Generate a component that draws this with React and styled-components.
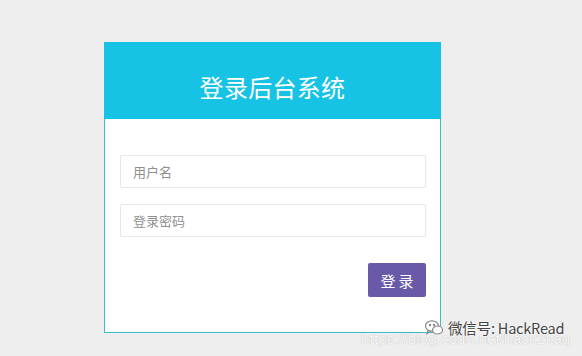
import React from "react";
import styled, { createGlobalStyle } from "styled-components";

const Global = createGlobalStyle`
  html, body { margin: 0; padding: 0; background: #efeeee; }
  body { font-family: "Noto Sans CJK SC", "Noto Sans", sans-serif; }
  * { box-sizing: border-box; }
`;

const Page = styled.div`
  position: relative;
  width: 582px;
  height: 356px;
  overflow: hidden;
  padding: 42px 0 0 104px;
`;

const Card = styled.div`
  width: 337px;
  height: 291px;
  background: #fff;
  border: 1px solid #3cbfcb;
  border-top: none;
  display: flex;
  flex-direction: column;
`;

const Header = styled.div`
  height: 77px;
  margin: 0 -1px;
  background: #17c3e5;
  display: flex;
  align-items: center;
  justify-content: center;
  padding-top: 12px;
`;

const Title = styled.h1`
  margin: 0;
  font-size: 24px;
  font-weight: 400;
  color: #fff;
  line-height: 1;
  letter-spacing: 0.3px;
`;

const Body = styled.div`
  padding: 36px 14px 0 15px;
  display: flex;
  flex-direction: column;
  gap: 16px;
`;

const Input = styled.input`
  height: 33px;
  width: 100%;
  border: 1px solid #e8e8e8;
  border-radius: 2px;
  padding: 0 12px;
  font-family: "Noto Sans CJK SC", sans-serif;
  font-size: 13px;
  color: #333;
  outline: none;
  &::placeholder { color: #8f8f8f; }
`;

const Actions = styled.div`
  display: flex;
  justify-content: flex-end;
  margin-top: 10px;
`;

const Button = styled.button`
  width: 58px;
  height: 34px;
  border: none;
  border-radius: 2px;
  background: #6959a8;
  color: #fff;
  font-family: "Noto Sans CJK SC", sans-serif;
  font-size: 15px;
  letter-spacing: 3px;
  padding: 0 0 0 3px;
`;

const Watermark = styled.div`
  position: absolute;
  left: 424px;
  top: 317px;
  display: flex;
  align-items: center;
  gap: 4px;
  font-family: "Noto Sans CJK SC", sans-serif;
  font-size: 14.5px;
  letter-spacing: -0.2px;
  color: #444;
  text-shadow: 0 0 2px #fff, 0 0 2px #fff;
  white-space: nowrap;
`;

const Url = styled.div`
  position: absolute;
  left: 361px;
  top: 330px;
  font-family: "Liberation Sans", sans-serif;
  font-size: 15.5px;
  color: rgba(255, 255, 255, 0.9);
  text-shadow: 0 0 1px rgba(0,0,0,0.3);
  white-space: nowrap;
`;

const WeChat = () => (
  <svg width="20" height="18" viewBox="0 0 20 18" fill="none" stroke="#888" strokeWidth="1.2">
    <ellipse cx="8" cy="7" rx="6.5" ry="5.2" />
    <path d="M4 11.5 L3 14.5 L6.5 12.3" />
    <ellipse cx="13.5" cy="11" rx="5" ry="4" fill="#fff" />
    <circle cx="6" cy="6" r="0.6" fill="#888" />
    <circle cx="10" cy="6" r="0.6" fill="#888" />
  </svg>
);

export default function App() {
  return (
    <>
      <Global />
      <Page>
        <Card>
          <Header>
            <Title>登录后台系统</Title>
          </Header>
          <Body>
            <Input placeholder="用户名" />
            <Input type="password" placeholder="登录密码" />
            <Actions>
              <Button>登录</Button>
            </Actions>
          </Body>
        </Card>
        <Url>https://blog.csdn.net/hack2kaq</Url>
        <Watermark>
          <WeChat />
          <span>微信号: HackRead</span>
        </Watermark>
      </Page>
    </>
  );
}
